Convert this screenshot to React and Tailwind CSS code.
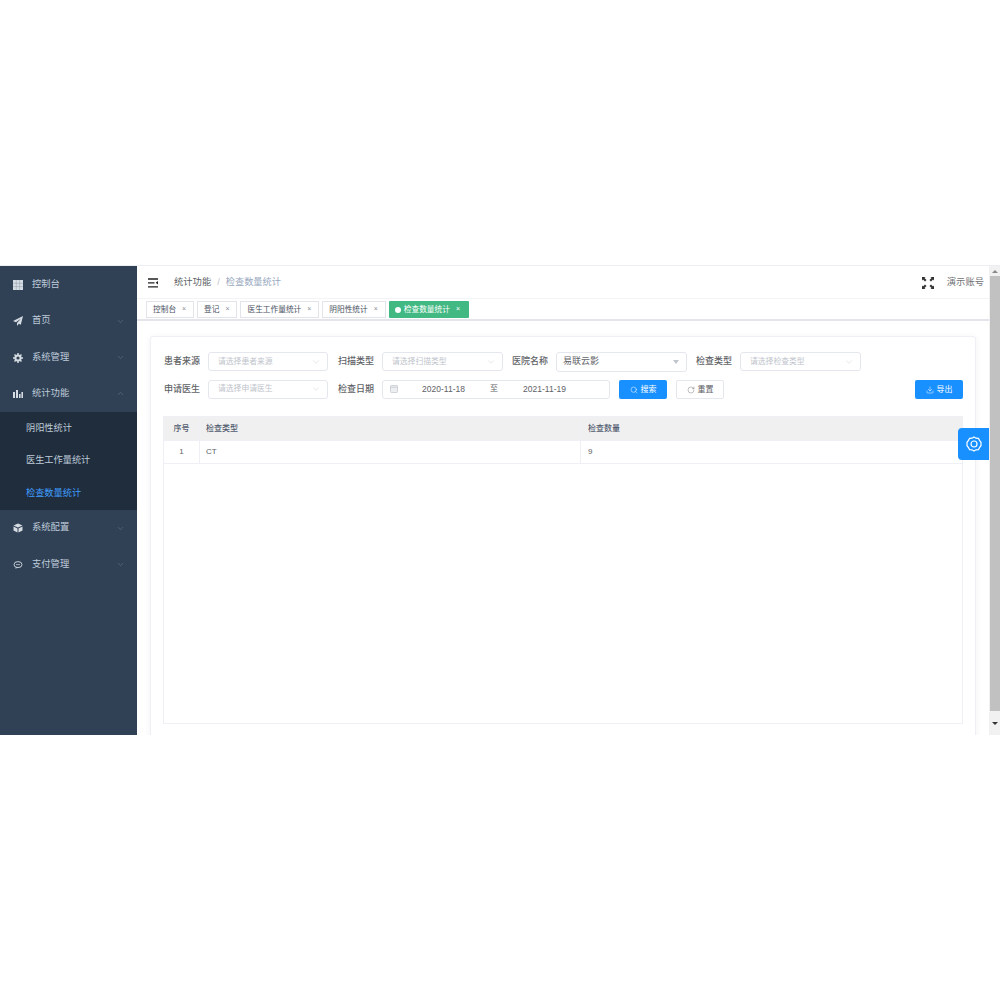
import React from "react";
import { ChevronDown, ChevronUp, Search, RotateCw, Download } from "lucide-react";

const FONT = "font-['Liberation_Sans','Noto_Sans_CJK_SC',sans-serif]";

function Ico({ type }) {
  const c = "#d5dbe3";
  if (type === "grid")
    return (
      <svg width="10" height="10" viewBox="0 0 10 10"><rect width="10" height="10" fill={c} /><path d="M0 3.3h10M0 6.6h10M3.3 0v10M6.6 0v10" stroke="#304156" strokeWidth=".2" /></svg>
    );
  if (type === "plane")
    return (
      <svg width="10" height="10" viewBox="0 0 10 10"><path d="M10 0 0 5l3 1.3L8 2.5 4 7v3l1.8-2.2 2 1z" fill={c} /></svg>
    );
  if (type === "gear")
    return (
      <svg width="10" height="10" viewBox="0 0 10 10"><circle cx="5" cy="5" r="2.6" fill="none" stroke={c} strokeWidth="2" /><path d="M5 0v2M5 8v2M0 5h2M8 5h2M1.5 1.5 3 3M7 7l1.5 1.5M8.5 1.5 7 3M3 7 1.5 8.5" stroke={c} strokeWidth="1.5" /></svg>
    );
  if (type === "bar")
    return (
      <svg width="10" height="10" viewBox="0 0 10 10"><path d="M0 3h2v6H0zM3 1h2v8H3zM6 5h1.6v4H6zM8.4 3H10v6H8.4z" fill={c} /></svg>
    );
  if (type === "box")
    return (
      <svg width="10" height="10" viewBox="0 0 10 10"><path d="M5 .5 9.5 2.5 5 4.5.5 2.5zM.5 3.5l4 2v4l-4-2zM9.5 3.5l-4 2v4l4-2z" fill={c} /></svg>
    );
  return (
    <svg width="10" height="10" viewBox="0 0 10 10"><ellipse cx="5" cy="4.6" rx="4" ry="3" fill="none" stroke={c} strokeWidth=".9" /><path d="M3 4.6h4" stroke={c} strokeWidth=".7" /><path d="M3 7.2 2.4 9l2-1.4" fill={c} /></svg>
  );
}

function MenuItem({ icon, label, arrow }) {
  return (
    <div className="flex h-[36.4px] items-center pl-[13px] pr-[12px] text-[9.3px] text-[#bfcbd9]">
      <span className="flex w-[19px] shrink-0"><Ico type={icon} /></span>
      <span className="flex-1">{label}</span>
      {arrow === "down" && <ChevronDown size={9} strokeWidth={1} className="text-[#8391a3]" />}
      {arrow === "up" && <ChevronUp size={9} strokeWidth={1} className="text-[#8391a3]" />}
    </div>
  );
}

function Sidebar() {
  return (
    <aside className="flex w-[137px] shrink-0 flex-col bg-[#304156] pt-[0.6px]">
      <MenuItem icon="grid" label="控制台" />
      <MenuItem icon="plane" label="首页" arrow="down" />
      <MenuItem icon="gear" label="系统管理" arrow="down" />
      <MenuItem icon="bar" label="统计功能" arrow="up" />
      <div className="flex h-[98px] flex-col bg-[#1f2d3d] text-[9.2px] text-[#bfcbd9]">
        {["阴阳性统计", "医生工作量统计", "检查数量统计"].map((t, i) => (
          <div key={t} className={`flex h-[32.6px] items-center pl-[26px] ${i === 2 ? "text-[#409eff]" : ""}`}>{t}</div>
        ))}
      </div>
      <MenuItem icon="box" label="系统配置" arrow="down" />
      <MenuItem icon="chat" label="支付管理" arrow="down" />
    </aside>
  );
}

function Tag({ label, active }) {
  return active ? (
    <div className="flex h-[17px] items-center rounded-[1px] bg-[#42b983] pl-[6px] pr-[9px] pt-px text-[7.7px] text-white">
      <span className="mr-[3px] h-[6px] w-[6px] rounded-full bg-white" />
      {label}
      <span className="ml-[6px] w-[4px] text-[7px]">×</span>
    </div>
  ) : (
    <div className="flex h-[17px] items-center border border-[#e2e4ea] bg-white pl-[6px] pr-[7px] pt-px text-[7.7px] text-[#495060]">
      {label}
      <span className="ml-[6px] w-[4px] text-[7px] text-[#8a8f99]">×</span>
    </div>
  );
}

function Select({ placeholder, value, w, caret }) {
  return (
    <div className={`flex items-center justify-between rounded-[3px] border border-[#e4e7ed] bg-white ${value ? "h-[20px] pl-[6px] pr-[7px] text-[9px] text-[#606266]" : "h-[19px] pl-[9px] pr-[6px] text-[7.8px] text-[#c0c4cc]"} ${w}`}>
      <span>{value || placeholder}</span>
      {caret ? (
        <span className="h-0 w-0 border-x-[3.5px] border-t-[4px] border-x-transparent border-t-[#c0c4cc]" />
      ) : (
        <ChevronDown size={10} strokeWidth={1} className="text-[#c0c4cc]" />
      )}
    </div>
  );
}

function Label({ children, w }) {
  return <span className={`text-[9px] font-medium text-[#606266] ${w}`}>{children}</span>;
}

export default function App() {
  return (
    <div className={`flex h-[1000px] flex-col bg-white py-[265px] ${FONT}`}>
      <div className="relative flex h-[470px] border-t border-[#eceef1]">
        <Sidebar />
        <div className="flex min-w-0 flex-1 flex-col overflow-hidden">
          <header className="flex h-[33px] shrink-0 items-center border-b border-[#f3f4f6] pl-[11px] pr-[5px] pt-px">
            <svg width="10" height="10" viewBox="0 0 10 10" className="mr-[16px]"><path d="M0 1h10M0 4.8h6.5M0 8.8h10" stroke="#222" strokeWidth="1.3" /><path d="M10 3 7.6 4.8 10 6.6z" fill="#222" /></svg>
            <span className="text-[9.3px] text-[#5c5f66]">统计功能</span>
            <span className="mx-[6px] text-[9.3px] text-[#c0c4cc]">/</span>
            <span className="text-[9.2px] text-[#97a8be]">检查数量统计</span>
            <span className="flex-1" />
            <svg width="12" height="12" viewBox="0 0 12 12" className="mr-[13px]"><path d="M0 0h3.5L2.5 1 4.5 3 3 4.5 1 2.5 0 3.5zM12 0v3.5l-1-1-2 2L7.5 3l2-2-1-1zM0 12V8.5l1 1 2-2L4.5 9l-2 2 1 1zM12 12H8.5l1-1-2-2L9 7.5l2 2 1-1z" fill="#333" /></svg>
            <span className="text-[9.3px] text-[#6f7175]">演示账号</span>
          </header>
          <div className="flex h-[22px] shrink-0 items-center gap-[3px] border-b-2 border-[#e3e5ea] pl-[9px]">
            <Tag label="控制台" />
            <Tag label="登记" />
            <Tag label="医生工作量统计" />
            <Tag label="阴阳性统计" />
            <Tag label="检查数量统计" active />
          </div>
          <main className="min-h-0 flex-1 overflow-hidden px-[13px] pt-[15px]">
            <div className="h-[420px] rounded-[3px] border border-[#eef0f5] bg-white px-[12px] pt-[14px] shadow-[0_1px_6px_rgba(0,0,0,0.06)]">
              <div className="flex h-[21px] items-center">
                <Label w="w-[45px] pl-px pt-px">患者来源</Label>
                <Select placeholder="请选择患者来源" w="w-[120px]" />
                <span className="w-[10px]" />
                <Label w="w-[44px] pt-px">扫描类型</Label>
                <Select placeholder="请选择扫描类型" w="w-[121px]" />
                <span className="w-[9px]" />
                <Label w="w-[44px] pt-px">医院名称</Label>
                <Select value="易联云影" w="w-[131px]" caret />
                <span className="w-[9px]" />
                <Label w="w-[44px] pt-px">检查类型</Label>
                <Select placeholder="请选择检查类型" w="w-[121px]" />
              </div>
              <div className="mt-[7px] flex h-[20px] items-center">
                <Label w="w-[45px] pl-px pt-[2px]">申请医生</Label>
                <Select placeholder="请选择申请医生" w="w-[120px]" />
                <span className="w-[10px]" />
                <Label w="w-[44px] pt-[2px]">检查日期</Label>
                <div className="flex h-[19px] w-[228px] items-center rounded-[3px] border border-[#e4e7ed] pl-[7px] text-[8.5px] text-[#606266]">
                  <svg width="8" height="8" viewBox="0 0 8 8" className="shrink-0"><rect x=".5" y=".5" width="7" height="7" rx=".8" fill="#eceef2" stroke="#c0c4cc" strokeWidth=".7" /><path d="M.5 2.3h7" stroke="#c0c4cc" strokeWidth=".7" /></svg>
                  <span className="w-[91px] text-center">2020-11-18</span>
                  <span className="w-[10px] text-center text-[8px]">至</span>
                  <span className="w-[91px] text-center">2021-11-19</span>
                </div>
                <div className="ml-[9px] flex h-[19px] w-[48px] items-center justify-center gap-[3px] rounded-[2px] bg-[#1890ff] pt-px text-[8px] text-white">
                  <Search size={8} strokeWidth={1.5} />搜索
                </div>
                <div className="ml-[9px] flex h-[19px] w-[48px] items-center justify-center gap-[3px] rounded-[2px] border border-[#e4e7ed] bg-white pt-px text-[8px] text-[#606266]">
                  <RotateCw size={8} strokeWidth={1.2} />重置
                </div>
                <span className="flex-1" />
                <div className="flex h-[19px] w-[48px] items-center justify-center gap-[3px] rounded-[2px] bg-[#1890ff] pt-px text-[8px] text-white">
                  <Download size={8} strokeWidth={1.5} />导出
                </div>
              </div>
              <div className="mt-[17px] flex h-[308px] flex-col border border-[#eef0f5] text-[8px] text-[#606266]">
                <div className="flex h-[24px] items-center border-b border-[#eef0f5] bg-[#f0f0f0] font-medium text-[#515a6e]">
                  <span className="flex h-full w-[36px] items-center justify-center border-r border-[#eef0f5]">序号</span>
                  <span className="flex h-full w-[381px] items-center border-r border-[#eef0f5] pl-[6px]">检查类型</span>
                  <span className="pl-[7px]">检查数量</span>
                </div>
                <div className="flex h-[23px] items-center border-b border-[#eef0f5]">
                  <span className="flex h-full w-[36px] items-center justify-center border-r border-[#eef0f5]">1</span>
                  <span className="flex h-full w-[381px] items-center border-r border-[#eef0f5] pl-[6px]">CT</span>
                  <span className="pl-[7px]">9</span>
                </div>
              </div>
            </div>
          </main>
        </div>
        <div className="flex w-[11px] shrink-0 flex-col bg-[#f1f1f1] pl-px">
          <div className="flex h-[10px] items-center justify-center">
            <span className="h-0 w-0 border-x-[3px] border-b-[3px] border-x-transparent border-b-[#8a8a8a]" />
          </div>
          <div className="h-[435px] bg-[#c1c1c1]" />
          <div className="flex flex-1 items-center justify-center">
            <span className="h-0 w-0 border-x-[3px] border-t-[3px] border-x-transparent border-t-[#333]" />
          </div>
        </div>
        <div className="absolute right-[11px] top-[162px] flex h-[32px] w-[31px] items-center justify-center rounded-l-[4px] bg-[#1890ff]">
          <svg width="16" height="16" viewBox="0 0 16 16" fill="none" stroke="#fff" strokeWidth="1.2"><path d="M8 1l2 1.2 2.4.1 1.1 2.1L15 6.3v3.4l-1.5 1.9-1.1 2.1-2.4.1L8 15l-2-1.2-2.4-.1-1.1-2.1L1 9.7V6.3l1.5-1.9 1.1-2.1L6 2.2z" /><circle cx="8" cy="8" r="3" /></svg>
        </div>
      </div>
    </div>
  );
}
